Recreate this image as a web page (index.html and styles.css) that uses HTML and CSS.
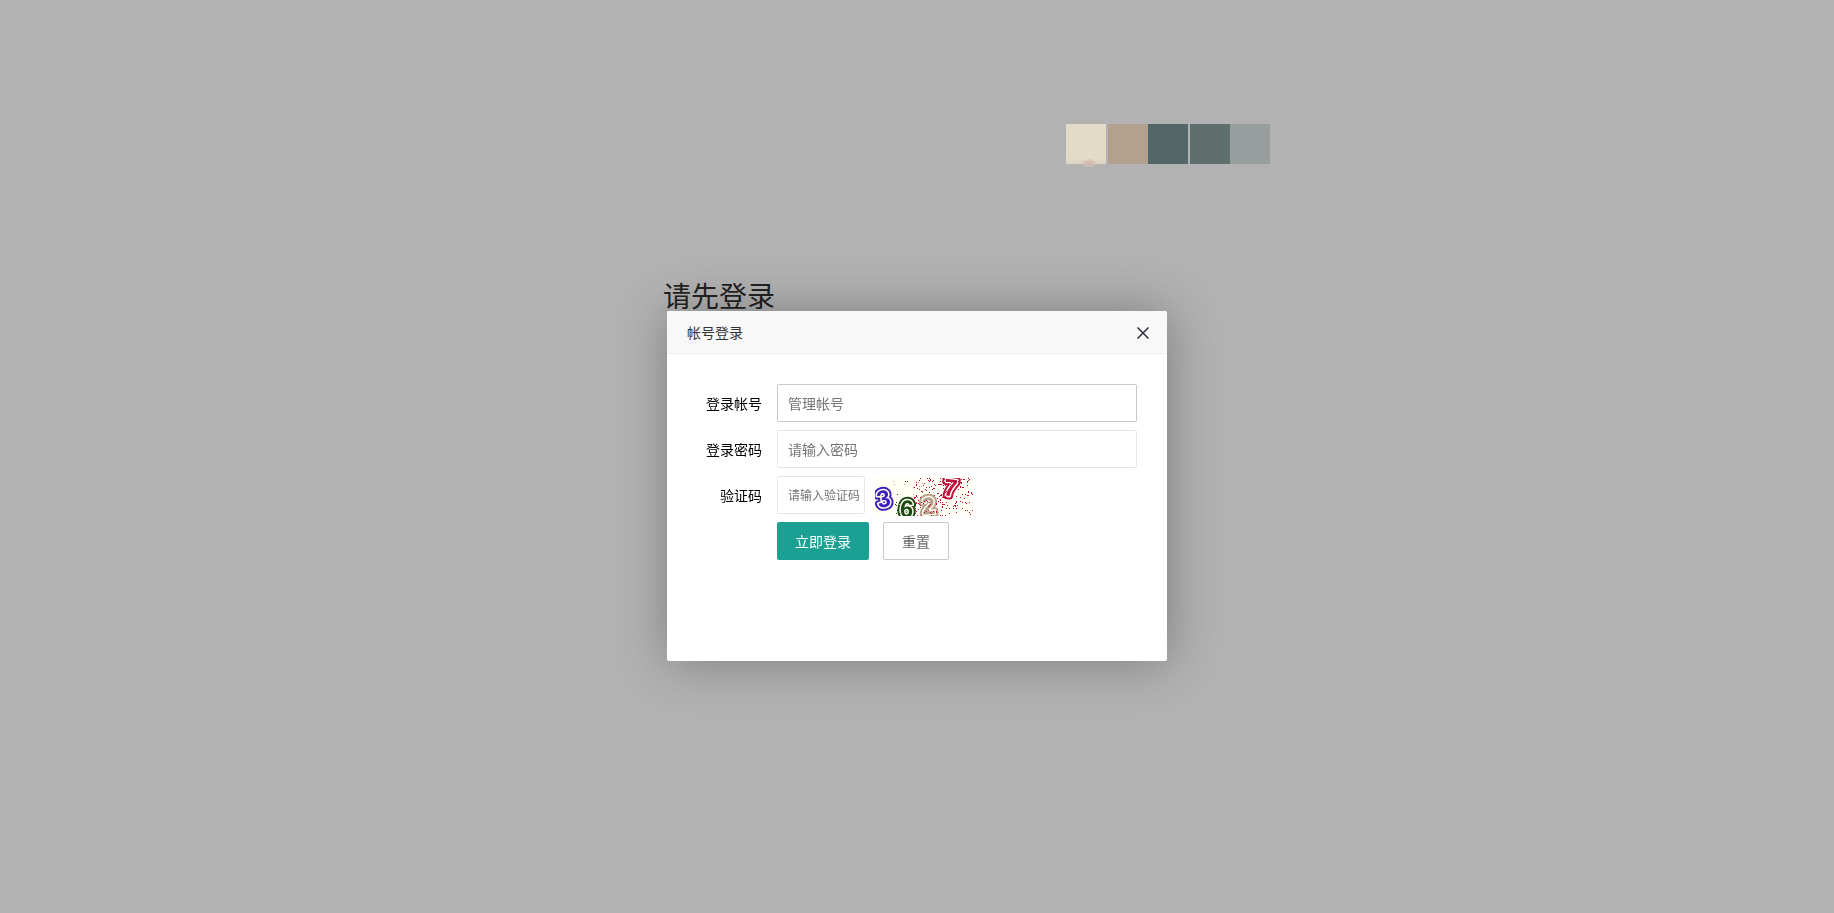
FILE: index.html
```html
<!DOCTYPE html>
<html lang="zh-CN">
<head>
    <meta charset="UTF-8">
    <meta name="viewport" content="width=device-width, initial-scale=1.0">
    <title>帐号登录</title>
    <link rel="stylesheet" href="styles.css">
</head>
<body>
<div class="page">
    <div class="palette">
        <span class="swatch cream"></span>
        <span class="swatch tan spaced"></span>
        <span class="swatch teal"></span>
        <span class="swatch moss spaced"></span>
        <span class="swatch mist"></span>
    </div>
    <h1>请先登录</h1>
</div>

<div class="layer">
    <div class="dialog" role="dialog" aria-labelledby="dialog-title">
        <div class="dialog-title">
            <h2 id="dialog-title">帐号登录</h2>
            <button type="button" class="close" aria-label="关闭">
                <svg width="12" height="12" viewBox="0 0 12 12">
                    <path d="M0.5 0.5L11.5 11.5M11.5 0.5L0.5 11.5" stroke="#2e2d3c" stroke-width="1.5" fill="none"/>
                </svg>
            </button>
        </div>

        <form class="login-form" id="login-form">
            <div class="form-item">
                <label for="username">登录帐号</label>
                <input type="text" id="username" class="active" name="username" placeholder="管理帐号">
            </div>
            <div class="form-item">
                <label for="password">登录密码</label>
                <input type="password" id="password" name="password" placeholder="请输入密码">
            </div>
            <div class="form-item">
                <label for="code">验证码</label>
                <input type="text" id="code" class="code" name="code" placeholder="请输入验证码">
                <svg class="captcha" width="98" height="38" viewBox="0 0 98 38">
                    <rect width="98" height="38" fill="#fffff5"/>
                    <g class="digit" fill="#3a1fb8" stroke="#3a1fb8" transform="rotate(-12 9 21)">
                        <text class="outer" x="2" y="29">3</text>
                        <text class="middle" x="2" y="29">3</text>
                        <text class="inner" x="2" y="29">3</text>
                    </g>
                    <g class="digit" fill="#1b4a12" stroke="#1b4a12" transform="rotate(6 31 31)">
                        <text class="outer" x="25" y="39">6</text>
                        <text class="middle" x="25" y="39">6</text>
                        <text class="inner" x="25" y="39">6</text>
                    </g>
                    <g class="digit" fill="#b5a288" stroke="#b5a288" transform="rotate(-6 54 28)">
                        <text class="outer" x="47" y="36">2</text>
                        <text class="middle" x="47" y="36">2</text>
                        <text class="inner" x="47" y="36">2</text>
                    </g>
                    <g class="digit" fill="#c0103f" stroke="#c0103f" transform="rotate(8 76 9)">
                        <text class="outer" x="69" y="18">7</text>
                        <text class="middle" x="69" y="18">7</text>
                        <text class="inner" x="69" y="18">7</text>
                    </g>
                    <g id="noise" shape-rendering="crispEdges"></g>
                </svg>
            </div>
            <div class="form-buttons">
                <button type="submit" class="btn">立即登录</button>
                <button type="reset" class="btn btn-primary">重置</button>
            </div>
        </form>
    </div>
</div>

<script src="captcha.js"></script>
</body>
</html>
```
FILE: styles.css
```css
body {
    margin: 0;
    min-height: 100vh;
    background-color: #b2b2b2;
    font-family: "Noto Sans CJK SC", sans-serif;
    font-size: 14px;
    line-height: 24px;
    color: #000;
}

h1, h2 {
    margin: 0;
    font-weight: 400;
}

.page {
    max-width: 706px;
    margin: 0 auto;
    padding-top: 124px;
}

.palette {
    display: flex;
    justify-content: flex-end;
}

.swatch {
    width: 40px;
    height: 40px;
}

.spaced {
    margin-left: 2px;
}

.cream {
    position: relative;
    background: linear-gradient(#e3dac8 88%, #dcd3c2);
}

/* soft spot on the lower edge */
.cream::after {
    content: "";
    position: absolute;
    left: 16px;
    bottom: -3px;
    width: 14px;
    height: 8px;
    border-radius: 50%;
    background: radial-gradient(#cfb2a6 20%, #d8cabd 70%);
    opacity: 0.7;
}

.tan {
    background-color: #b3a18e;
}

.teal {
    background-color: #536769;
}

.moss {
    background-color: #5f6f6e;
}

.mist {
    background-color: #979e9d;
}

.page h1 {
    margin-top: 111px;
    padding-left: 99px;
    font-size: 28px;
    line-height: 40px;
    color: #222;
}

/* Login dialog */
.layer {
    position: fixed;
    inset: 0;
    display: flex;
    align-items: center;
    justify-content: center;
    padding-top: 58px;
}

.dialog {
    width: 500px;
    min-height: 350px;
    background-color: #fff;
    border-radius: 2px;
    box-shadow: 1px 1px 50px rgba(0, 0, 0, 0.3);
}

.dialog-title {
    display: flex;
    align-items: center;
    justify-content: space-between;
    height: 42px;
    padding: 0 18px 0 20px;
    background-color: #f8f8f8;
    border-bottom: 1px solid #eee;
    border-radius: 2px 2px 0 0;
}

.dialog-title h2 {
    font-size: 14px;
    color: #333;
}

.close {
    display: flex;
    padding: 2px 0 0;
    border: none;
    background: none;
    cursor: pointer;
}

.login-form {
    display: flex;
    flex-direction: column;
    gap: 8px;
    padding: 30px 30px 0 0;
}

.form-item {
    display: flex;
    align-items: center;
}

.form-item label {
    width: 80px;
    padding: 0 15px;
    text-align: right;
}

.form-item input {
    flex: 1;
    box-sizing: border-box;
    height: 38px;
    padding: 0 0 0 10px;
    border: 1px solid #e6e6e6;
    border-radius: 2px;
    font-family: inherit;
    font-size: 14px;
    outline: none;
}

.form-item input:hover, .form-item input.active {
    border-color: #c9c9c9;
}

.form-item input::placeholder {
    color: #757575;
}

.form-item .code {
    flex: none;
    width: 88px;
    font-size: 12px;
}

.captcha {
    margin: 2px 0 -2px 10px;
}

.digit {
    font-family: "Liberation Sans", sans-serif;
    font-size: 24px;
    font-weight: bold;
    stroke-linejoin: round;
}

.outer {
    stroke-width: 7px;
}

.middle {
    stroke: #fffff5;
    stroke-width: 3px;
}

.inner {
    stroke-width: 0;
}

.form-buttons {
    display: flex;
    gap: 14px;
    padding-left: 110px;
}

.btn {
    height: 38px;
    padding: 0 18px;
    border: none;
    border-radius: 2px;
    background-color: #1ca093;
    color: #fff;
    font-family: inherit;
    font-size: 14px;
    cursor: pointer;
}

.btn-primary {
    border: 1px solid #c9c9c9;
    background-color: #fff;
    color: #666;
}
```
FILE: captcha.js
```js
var noise = document.getElementById("noise");
var seed = 3627;

function random() {
    seed = (seed * 16807) % 2147483647;
    return seed / 2147483647;
}

function addDots(count, left, right, color) {
    for (var i = 0; i < count; i++) {
        var dot = document.createElementNS("http://www.w3.org/2000/svg", "rect");
        dot.setAttribute("x", Math.floor(left + random() * (right - left)));
        dot.setAttribute("y", Math.floor(random() * 38));
        dot.setAttribute("width", 1);
        dot.setAttribute("height", 1);
        dot.setAttribute("fill", color);
        noise.appendChild(dot);
    }
}

addDots(18, 18, 50, "#b5a288");
addDots(10, 20, 45, "#1b4a12");
addDots(190, 39, 98, "#c0103f");

document.getElementById("login-form").addEventListener("submit", function(event) {
    event.preventDefault();
});
```
